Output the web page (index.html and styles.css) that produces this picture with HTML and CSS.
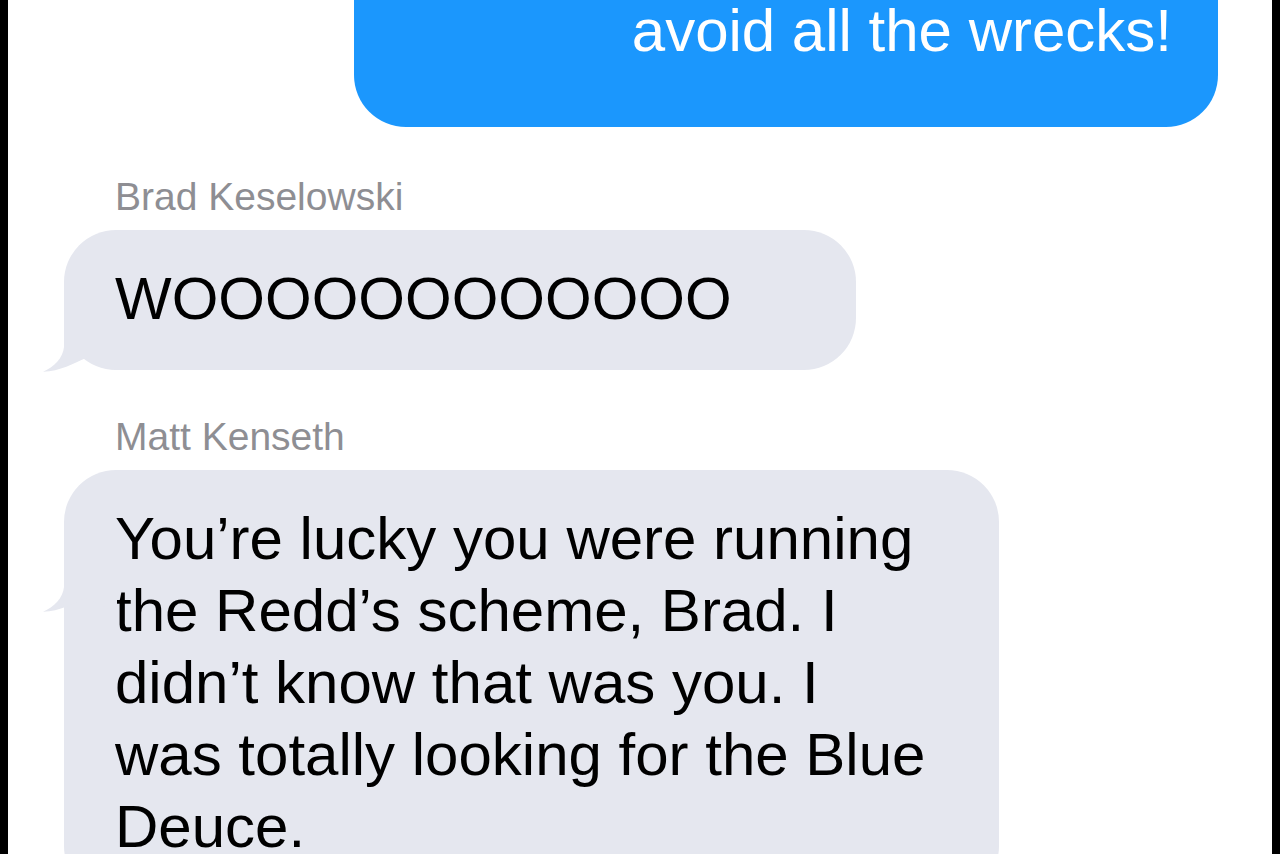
FILE: index.html
```html
<!DOCTYPE html>
<html lang="en">
<head>
  <meta charset="UTF-8">
  <title>Messages</title>
  <link rel="stylesheet" href="styles.css">
</head>
<body>
  <div class="screen">
    <div class="thread">
      <div class="bubble sent">avoid all the wrecks!</div>

      <div class="group">
        <div class="sender">Brad Keselowski</div>
        <div class="bubble received short">
          WOOOOOOOOOOOO
          <svg class="tail" viewBox="0 0 76 60" width="76" height="60"><path d="M22 0 V35 C21 46 12 55 1 59.7 C18 59.5 32 51 44 46 C52 48 60 57 75 58 V0 Z"/></svg>
        </div>
      </div>

      <div class="group">
        <div class="sender">Matt Kenseth</div>
        <div class="bubble received long">
          You’re lucky you were running the Redd’s scheme, Brad. I didn’t know that was you. I was totally looking for the Blue Deuce.
          <svg class="tail" viewBox="0 0 76 60" width="76" height="60"><path d="M22 0 V35 C21 46 12 55 1 59.7 C18 59.5 32 51 44 46 C52 48 60 57 75 58 V0 Z"/></svg>
        </div>
      </div>
    </div>
  </div>
</body>
</html>
```

FILE: styles.css
```css
body {
  margin: 0;
  padding: 0;
  background: #000;
  font-family: "Liberation Sans", Arial, sans-serif;
}

.screen {
  margin: 0 8px;
  height: 854px;
  background: #fff;
  overflow: hidden;
}

.thread {
  display: flex;
  flex-direction: column;
  align-items: flex-start;
  padding: 0 54px 0 56px;
}

.group {
  margin-top: 44px;
}

.sender {
  font-size: 39px;
  line-height: 46px;
  color: #8e8e93;
  margin: 0 0 10px 51px;
}

.bubble {
  position: relative;
  font-size: 60px;
  line-height: 72px;
  border-radius: 52px;
  padding: 33px 64px 35px 51px;
}

.bubble.sent {
  align-self: flex-end;
  box-sizing: border-box;
  width: 864px;
  margin-top: -60px;
  margin-bottom: 3px;
  padding: 55px 46px 60px;
  text-align: right;
  background: #1b97fd;
  color: #fff;
}

.bubble.received {
  background: #e5e7ef;
  color: #000;
}

.bubble.short {
  padding-right: 124px;
}

.bubble.long {
  width: 820px;
}

.tail {
  position: absolute;
  left: -22px;
  top: 82px;
  fill: #e5e7ef;
}
```
